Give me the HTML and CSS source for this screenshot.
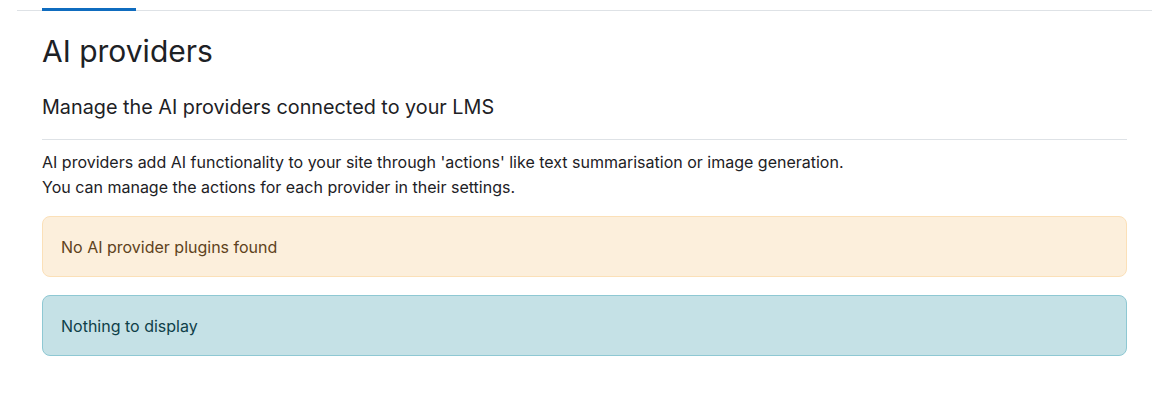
FILE: index.html
```html
<!DOCTYPE html>
<html lang="en">
<head>
<meta charset="utf-8">
<title>AI providers</title>
<link rel="stylesheet" href="styles.css">
</head>
<body>
<nav class="tabs">
  <div class="tab active"></div>
</nav>
<main class="content">
  <h2 class="page-title">AI providers</h2>
  <h3 class="section-title">Manage the AI providers connected to your LMS</h3>
  <p class="desc">AI providers add AI functionality to your site through 'actions' like text summarisation or image generation.<br>You can manage the actions for each provider in their settings.</p>
  <div class="alert alert-warning">No AI provider plugins found</div>
  <div class="alert alert-info">Nothing to display</div>
</main>
</body>
</html>
```
FILE: styles.css
```css
html, body {
  margin: 0;
  padding: 0;
  background: #fff;
}
body {
  font-family: Inter, "Noto Sans", sans-serif;
  font-size: 16px;
  line-height: 1.5;
  color: #1d2125;
}
.tabs {
  display: flex;
  margin: 0 20px 0 17px;
  height: 10px;
  border-bottom: 1px solid #dee2e6;
}
.tab {
  margin-left: 25px;
  width: 94px;
  align-self: flex-end;
  height: 3px;
  margin-bottom: -1px;
  background: #0f6cbf;
}
.content {
  padding: 0 45px 0 42px;
}
.page-title {
  margin: 22px 0 0;
  font-size: 30px;
  font-weight: 400;
  line-height: 1.2;
}
.section-title {
  margin: 27px 0 0;
  padding-bottom: 19px;
  border-bottom: 1px solid #dee2e6;
  font-size: 19.8px;
  font-weight: 400;
  line-height: 1.2;
}
.desc {
  margin: 10px 0 0;
  line-height: 25px;
}
.alert {
  margin-top: 18px;
  padding: 18px 18px 17px;
  border: 1px solid transparent;
  border-radius: 8px;
  line-height: 24px;
}
.alert-warning {
  margin-top: 16px;
  background: #fcefdc;
  border-color: #fbe0b8;
  color: #5e4220;
}
.alert-info {
  background: #c5e1e6;
  border-color: #8ec8d3;
  color: #0f3f49;
}
```
